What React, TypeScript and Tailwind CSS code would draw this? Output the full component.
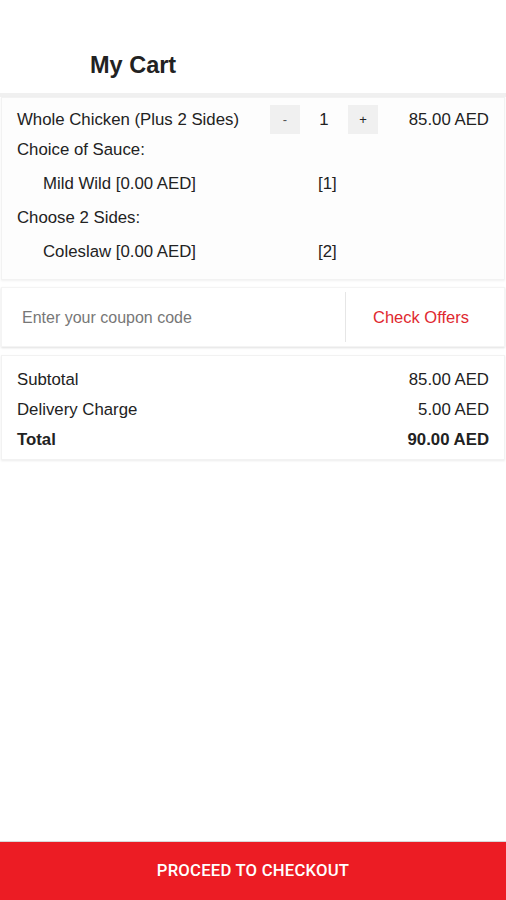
import React from "react"

interface Option {
  name: string
  qty: number
}

interface OptionGroup {
  title: string
  options: Option[]
}

const groups: OptionGroup[] = [
  { title: "Choice of Sauce:", options: [{ name: "Mild Wild [0.00 AED]", qty: 1 }] },
  { title: "Choose 2 Sides:", options: [{ name: "Coleslaw [0.00 AED]", qty: 2 }] },
]

export default function App() {
  const [coupon, setCoupon] = React.useState("")
  const [qty, setQty] = React.useState(1)

  return (
    <div className="flex flex-col h-[900px] w-[506px] bg-white text-[#222] font-['Liberation_Sans',Arial,sans-serif]">
      {/* HEADER */}
      <div className="h-[93px] flex items-end pb-[16px] pl-[90px]">
        <h1 className="text-[23.5px] font-bold leading-none">My Cart</h1>
      </div>
      <div className="h-[4px] bg-[#f0f0f0]" />

      {/* ITEM */}
      <div className="h-[183px] mx-[1px] bg-[#fdfdfd] border border-[#f2f2f2] shadow-[0_1px_2px_rgba(0,0,0,0.06)] pl-[15px] pr-[15px] pt-[7px] text-[16.8px]">
        <div className="flex items-center h-[29px]">
          <span className="w-[253px] whitespace-nowrap">Whole Chicken (Plus 2 Sides)</span>
          <button
            className="w-[30px] h-[29px] bg-[#f0f0f0] text-[13px] text-[#555]"
            onClick={() => setQty((q) => Math.max(1, q - 1))}
          >-</button>
          <span className="w-[48px] text-center">{qty}</span>
          <button
            className="w-[30px] h-[29px] bg-[#f0f0f0] text-[13px]"
            onClick={() => setQty((q) => q + 1)}
          >+</button>
          <span className="ml-auto">{(85 * qty).toFixed(2)} AED</span>
        </div>
        {groups.map((g) => (
          <div key={g.title}>
            <div className="h-[31px] flex items-center">{g.title}</div>
            {g.options.map((o) => (
              <div key={o.name} className="h-[37px] flex items-center pl-[26px] pt-[1px]">
                <span className="w-[275px]">{o.name}</span>
                <span>[{o.qty}]</span>
              </div>
            ))}
          </div>
        ))}
      </div>

      {/* COUPON */}
      <div className="mt-[7px] mx-[1px] flex items-center h-[60px] bg-white border border-[#f4f4f4] shadow-[0_1px_2px_rgba(0,0,0,0.12)]">
        <input
          className="flex-1 h-full pl-[20px] pt-[1px] text-[16px] outline-none placeholder:text-[#777] bg-transparent"
          placeholder="Enter your coupon code"
          value={coupon}
          onChange={(e) => setCoupon(e.target.value)}
        />
        <div className="w-[1px] h-[50px] bg-[#e6e6e6]" />
        <button className="w-[158px] h-full pr-[8px] text-[16.5px] text-[#e0282f] text-center">Check Offers</button>
      </div>

      {/* TOTALS */}
      <div className="mt-[8px] mx-[1px] bg-white border border-[#f2f2f2] shadow-[0_1px_2px_rgba(0,0,0,0.08)] pl-[15px] pr-[15px] pt-[9px] pb-[4px] text-[16.8px]">
        <div className="flex justify-between h-[30px] items-center">
          <span>Subtotal</span>
          <span>85.00 AED</span>
        </div>
        <div className="flex justify-between h-[30px] items-center">
          <span>Delivery Charge</span>
          <span>5.00 AED</span>
        </div>
        <div className="flex justify-between h-[30px] items-center font-bold">
          <span>Total</span>
          <span>90.00 AED</span>
        </div>
      </div>

      <div className="flex-1" />

      {/* CHECKOUT */}
      <button className="h-[59px] bg-[#ec1c24] text-white text-[16.7px] font-medium font-['Roboto',sans-serif] tracking-[0.2px] border-t border-[#d8d8d8]">
        PROCEED TO CHECKOUT
      </button>
    </div>
  )
}
